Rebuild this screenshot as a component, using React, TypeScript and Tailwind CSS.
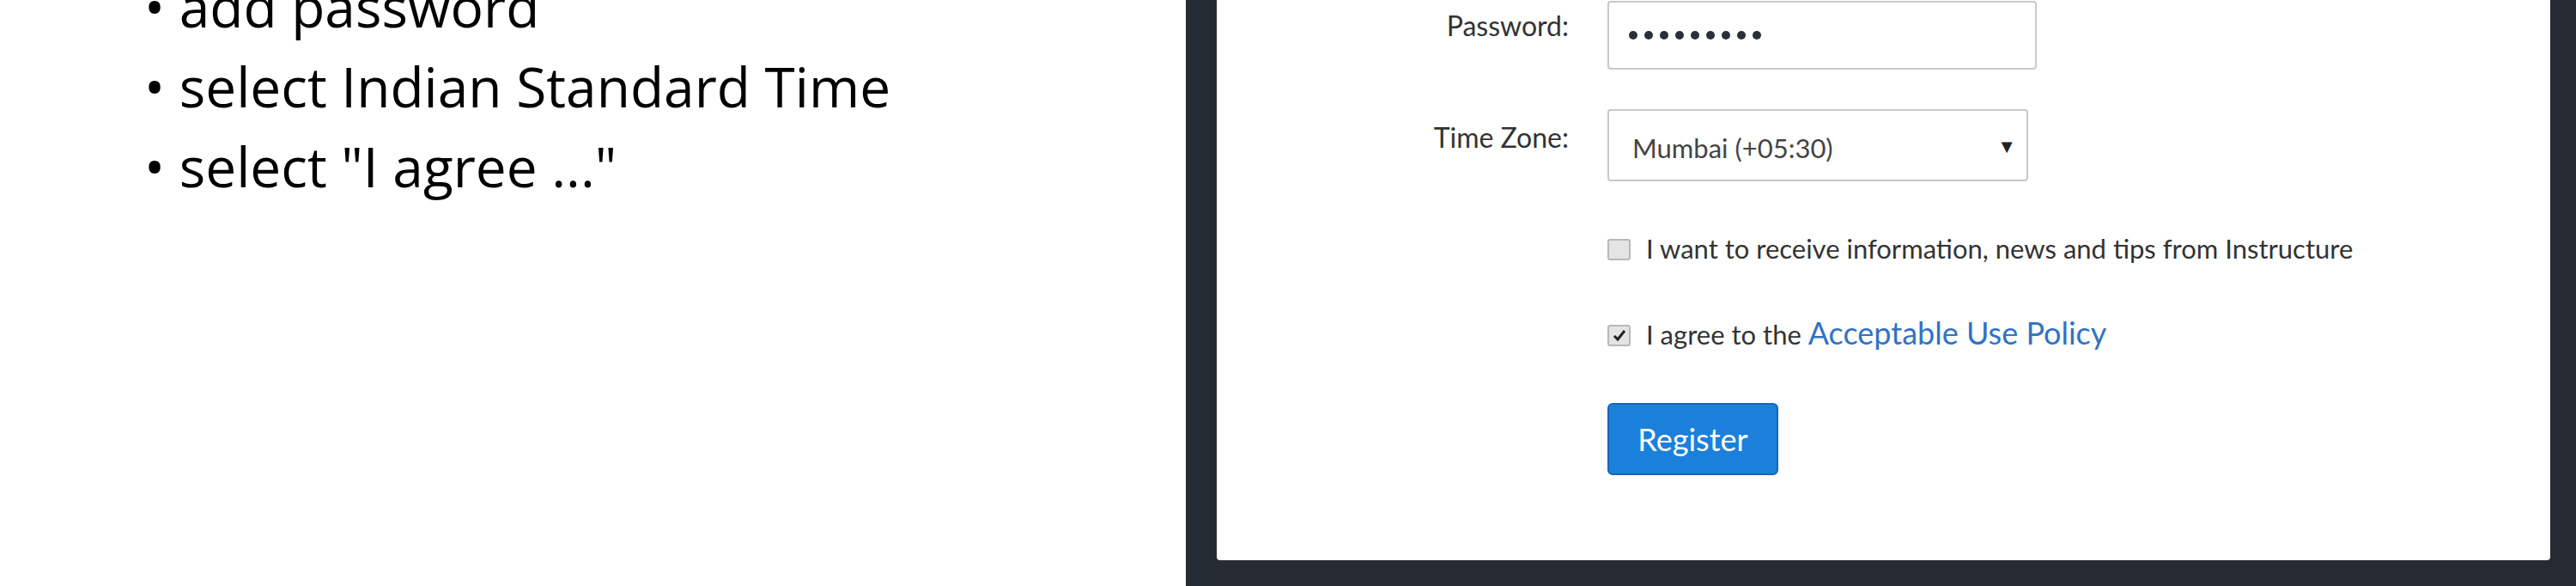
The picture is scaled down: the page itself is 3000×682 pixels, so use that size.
const steps = ["add password", "select Indian Standard Time", 'select "I agree ..."'];

const Checkbox = ({ checked }: { checked?: boolean }) => (
  <div className="w-[27px] h-[25px] shrink-0 rounded-[3px] border-2 border-[#b9b9b9] bg-[#e4e4e4] flex items-center justify-center">
    {checked && (
      <svg width="16" height="15" viewBox="0 0 16 15">
        <path d="M2 8 L6 12 L14 2" fill="none" stroke="#222" strokeWidth="3" />
      </svg>
    )}
  </div>
);

const App = () => {
  return (
    <div className="flex h-[682px] w-[3000px] overflow-hidden bg-white">
      {/* slide notes on the left */}
      <div className="w-[1381px] shrink-0 pl-[168px]">
        <ul className="-mt-[39px] font-['Open_Sans',sans-serif] text-[64px] leading-[93px] text-black">
          {steps.map((step) => (
            <li key={step} className="whitespace-nowrap">• {step}</li>
          ))}
        </ul>
      </div>

      {/* canvas register form screenshot */}
      <div className="flex-1 bg-[#242b33] pl-[36px] pr-[30px]">
        <div className="-mt-[40px] h-[692px] rounded-[4px] bg-white pt-[41px] font-['Lato',sans-serif] text-[#333]">
          <div className="flex items-start gap-[45px]">
            <div className="w-[410px] mt-[10px] text-right text-[32px] leading-[38px]">Password:</div>
            <div className="w-[500px] h-[80px] rounded-[4px] border-2 border-[#c9c9c9] flex items-center gap-[8px] pl-[23px]">
              {Array.from({ length: 9 }).map((_, i) => (
                <span key={i} className="w-[10px] h-[10px] rounded-full bg-[#2b2f36]" />
              ))}
            </div>
          </div>

          <div className="flex items-start gap-[45px] mt-[46px]">
            <div className="w-[410px] mt-[14px] text-right text-[32px] leading-[38px]">Time Zone:</div>
            <div className="w-[490px] h-[84px] rounded-[4px] border-2 border-[#c9c9c9] flex items-center justify-between pl-[27px] pr-[12px] pt-[5px]">
              <span className="text-[31px] leading-[36px] text-[#444]">Mumbai (+05:30)</span>
              <span className="text-[22px] text-[#222] -mt-[5px]">▼</span>
            </div>
          </div>

          <div className="flex items-start gap-[18px] mt-[60px] ml-[455px]">
            <div className="mt-[7px]"><Checkbox /></div>
            <span className="text-[31px] leading-[37px] whitespace-nowrap">I want to receive information, news and tips from Instructure</span>
          </div>

          <div className="flex items-start gap-[18px] mt-[61px] ml-[455px]">
            <div className="mt-[9px]"><Checkbox checked /></div>
            <span className="text-[31px] leading-[37px] whitespace-nowrap">
              I agree to the <span className="text-[36px] leading-[37px] text-[#3072c6]">Acceptable Use Policy</span>
            </span>
          </div>

          <button className="mt-[61px] ml-[455px] w-[199px] h-[84px] rounded-[6px] border-2 border-[#1766b8] bg-[#1b7fdc] text-white text-[36px] font-['Lato',sans-serif]">
            Register
          </button>
        </div>
      </div>
    </div>
  );
};

export default App;
